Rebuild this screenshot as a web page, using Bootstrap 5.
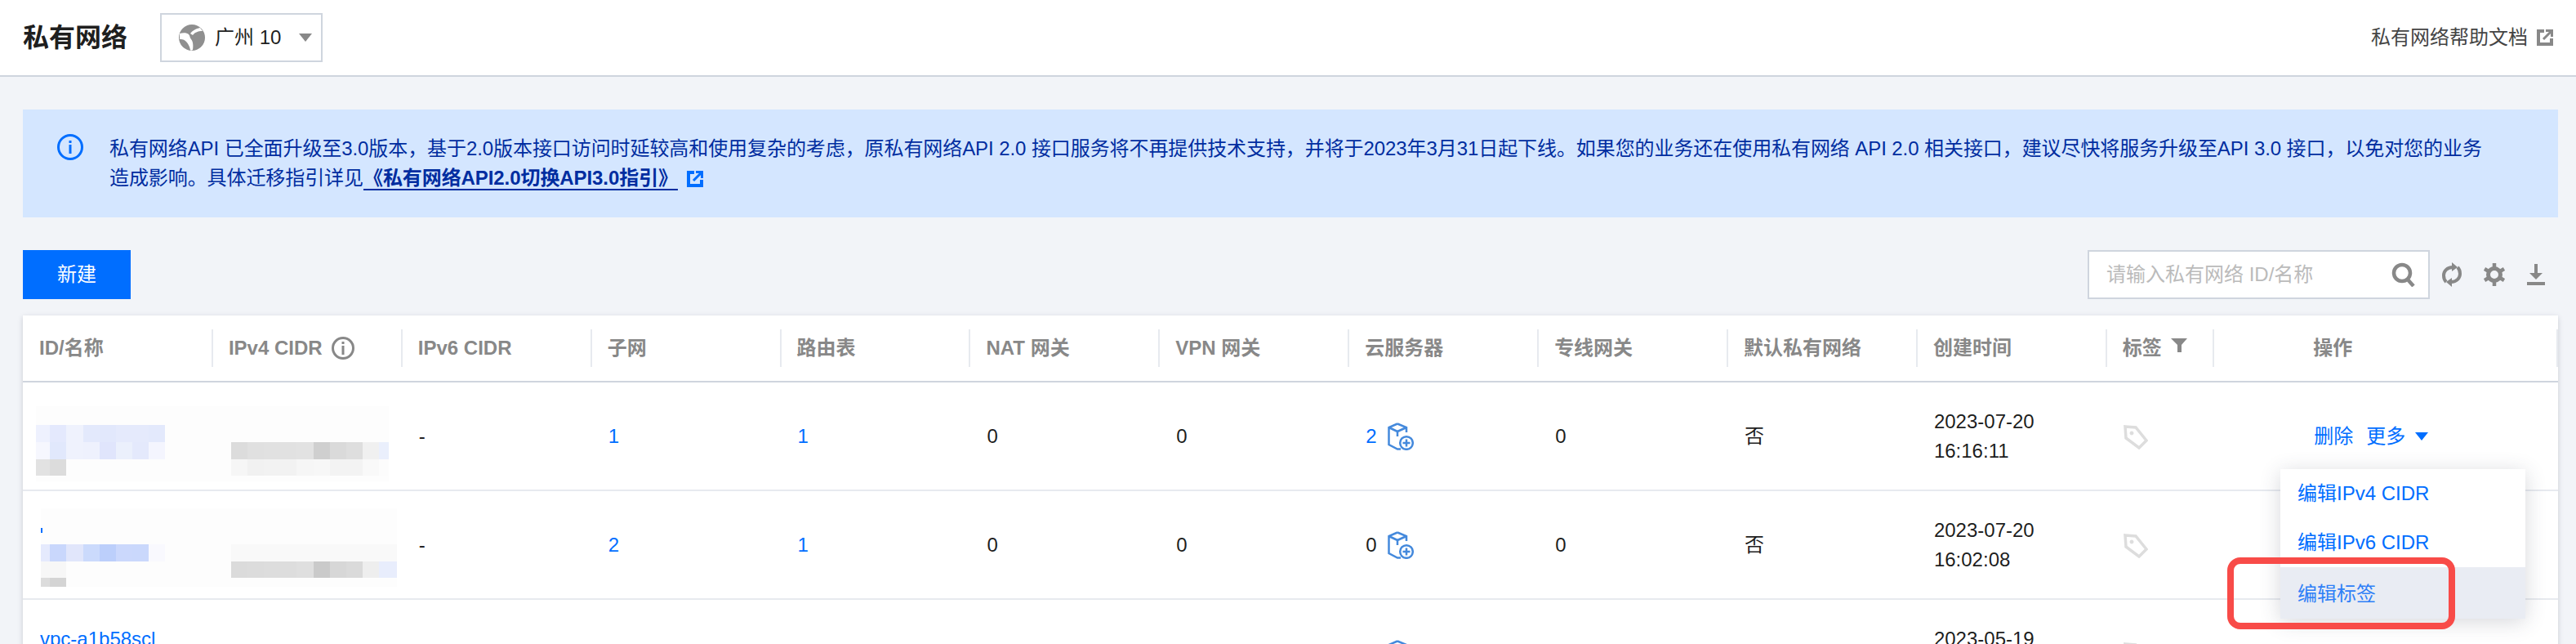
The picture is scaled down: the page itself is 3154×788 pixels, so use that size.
<!DOCTYPE html>
<html lang="zh-CN">
<head>
    <meta charset="UTF-8">
    <meta name="viewport" content="width=device-width, initial-scale=1.0">
    <title>私有网络</title>
    <link rel="stylesheet" href="https://cdn.jsdelivr.net/npm/bootstrap@5.3.0/dist/css/bootstrap.min.css">
    <style>
        html, body {
            height: 788px;
            overflow: hidden;
        }
        body {
            background: #f2f4f8;
            color: rgba(0, 0, 0, .9);
            font-family: "Liberation Sans", "Noto Sans CJK SC", sans-serif;
            font-size: 24px;
            line-height: 36px;
        }
        .top-bar {
            height: 94px;
            background: #fff;
            border-bottom: 2px solid #cfd5de;
            padding: 0 28px;
        }
        .page-title {
            font-size: 32px;
            font-weight: 700;
            margin: 0 40px 0 0;
            line-height: 44px;
        }
        .region-select {
            width: 199px;
            height: 60px;
            border: 2px solid #cfd5de;
            padding-left: 21px;
            gap: 12px;
        }
        .caret-down {
            width: 0;
            height: 0;
            margin-left: 10px;
            border-left: 8px solid transparent;
            border-right: 8px solid transparent;
            border-top: 10px solid #888;
        }
        .help-link {
            color: #444;
            gap: 11px;
            text-decoration: none;
        }
        .page-body {
            padding: 40px 22px 0 28px;
        }
        .notice {
            background: #d4e6ff;
            color: #002da0;
            border: 0;
            border-radius: 0;
            margin: 0 0 40px;
            padding: 30px 70px 30px 42px;
            gap: 32px;
            letter-spacing: -.08px;
        }
        .notice-link {
            color: #002da0;
            font-weight: 700;
            text-decoration-thickness: 2px;
            text-underline-offset: 5px;
        }
        .notice-ext {
            vertical-align: -3px;
            margin-left: 4px;
        }
        .btn-new {
            width: 132px;
            height: 60px;
            background: #006eff;
            border: 0;
            border-radius: 0;
            font-size: 24px;
        }
        .search-box {
            width: 419px;
            height: 60px;
            border: 2px solid #cfd5de;
            background: #fff;
            padding-right: 15px;
        }
        .search-input {
            border: 0;
            border-radius: 0;
            padding: 0 0 0 21px;
            font-size: 24px;
            height: 56px;
            background: transparent;
        }
        .search-input::placeholder {
            color: #bbb;
        }
        .tool-icons {
            gap: 27px;
            padding: 0 16px 0 15px;
        }
        .vpc-card {
            margin-top: 20px;
            background: #fff;
            box-shadow: 0 2px 6px rgba(54, 58, 80, .22);
        }
        .vpc-table {
            table-layout: fixed;
            width: 100%;
            margin: 0;
            border-collapse: separate;
            border-spacing: 0;
            --bs-table-bg: transparent;
            color: inherit;
        }
        .vpc-table th {
            height: 82px;
            padding: 0;
            border-bottom: 2px solid #cfd5de;
            font-weight: 700;
            color: #888;
            vertical-align: middle;
        }
        .vpc-table td {
            height: 133px;
            padding: 0 0 0 21px;
            border-bottom: 2px solid #e7eaef;
            vertical-align: middle;
        }
        .col-base { width: 231.9px; }
        .col-tag { width: 131.5px; }
        .th-inner {
            height: 46px;
            border-left: 2px solid #e7eaef;
            padding-left: 19px;
            margin-left: -1px;
            gap: 11px;
        }
        .th-first {
            border-left: 0;
            padding-left: 20px;
            margin-left: 0;
        }
        .th-op {
            padding-left: 121px;
            border-right: 2px solid #e7eaef;
        }
        .vpc-table td.td-op {
            padding-left: 123px;
        }
        .blue-link {
            color: #006eff;
            text-decoration: none;
        }
        .cvm-cell {
            gap: 13px;
        }
        .caret-blue {
            width: 0;
            height: 0;
            margin-left: 12px;
            border-left: 8px solid transparent;
            border-right: 8px solid transparent;
            border-top: 10px solid #006eff;
        }
        .mosaic {
            position: absolute;
            left: 16px;
            filter: blur(.7px);
        }
        .mosaic-a { top: 111px; }
        .mosaic-b { top: 236px; left: 22px; }
        .row-menu {
            display: block;
            position: absolute;
            top: 188px;
            left: 2764px;
            width: 300px;
            padding: 0;
            margin: 0;
            border: 0;
            border-radius: 0;
            font-size: 24px;
            box-shadow: 0 4px 24px rgba(54, 58, 80, .2);
        }
        .row-menu .dropdown-item {
            height: 60px;
            line-height: 60px;
            padding: 0 0 0 21px;
            color: #006eff;
        }
        .row-menu .dropdown-item.menu-hover {
            height: 63px;
            line-height: 66px;
            background: #e9ecf3;
            color: #2f80f7;
        }
        .red-box {
            position: absolute;
            z-index: 1001;
            top: 296px;
            left: 2699px;
            width: 279px;
            height: 88px;
            border: 8px solid #f84b48;
            border-radius: 16px;
            pointer-events: none;
        }
    </style>
</head>
<body>

    <header class="top-bar d-flex align-items-center">
        <h1 class="page-title">私有网络</h1>
        <div class="region-select d-flex align-items-center">
            <svg width="32" height="32" viewBox="0 0 32 32">
                <circle cx="16" cy="16" r="16" fill="#8f8f8f"/>
                <path d="M1 11c4-1 9-1 11 1s1 4 3 6 3 7 2 13c-1 1-3 1-3 0-1-5-3-8-5-10S6 18 1 18z" fill="#fff"/>
                <path d="M14 11c2-3 7-6 12-7l3 4c-6 0-10 2-12 5z" fill="#fff"/>
            </svg>
            <span>广州 10</span>
            <span class="caret-down"></span>
        </div>
        <a class="help-link d-flex align-items-center ms-auto" href="#">
            <span>私有网络帮助文档</span>
            <svg width="20" height="20" viewBox="0 0 20 20" fill="none" stroke="#888" stroke-width="4">
                <path d="M9 2H2v16h16v-7"/>
                <path d="M8 12L17 3" stroke-width="3"/>
                <path d="M11 1.500h7.500V9" stroke-width="3"/>
            </svg>
        </a>
    </header>

    <main class="page-body">
        <div class="alert notice d-flex">
            <svg class="flex-shrink-0" width="32" height="32" viewBox="0 0 32 32">
                <circle cx="16" cy="16" r="14.500" fill="none" stroke="#006eff" stroke-width="3"/>
                <rect x="14.500" y="8" width="3" height="3" fill="#006eff"/>
                <rect x="14.500" y="13" width="3" height="11" fill="#006eff"/>
            </svg>
            <div>私有网络API 已全面升级至3.0版本，基于2.0版本接口访问时延较高和使用复杂的考虑，原私有网络API 2.0 接口服务将不再提供技术支持，并将于2023年3月31日起下线。如果您的业务还在使用私有网络 API 2.0 相关接口，建议尽快将服务升级至API 3.0 接口，以免对您的业务造成影响。具体迁移指引详见<a class="notice-link" href="#">《私有网络API2.0切换API3.0指引》</a>
                <svg class="notice-ext" width="20" height="20" viewBox="0 0 20 20" fill="none" stroke="#006eff" stroke-width="4">
                    <path d="M9 2H2v16h16v-7"/>
                    <path d="M8 12L17 3" stroke-width="3"/>
                    <path d="M11 1.500h7.500V9" stroke-width="3"/>
                </svg>
            </div>
        </div>

        <div class="d-flex justify-content-between">
            <button class="btn btn-primary btn-new" type="button">新建</button>
            <div class="d-flex align-items-center">
                <div class="search-box d-flex align-items-center">
                    <input class="form-control search-input" type="text" placeholder="请输入私有网络 ID/名称">
                    <svg class="flex-shrink-0" width="30" height="30" viewBox="0 0 30 30" fill="none" stroke="#888" stroke-width="4.500">
                        <circle cx="13" cy="13" r="10"/>
                        <path d="M19 20l8 9"/>
                    </svg>
                </div>
                <div class="tool-icons d-flex align-items-center">
                    <svg width="24" height="32" viewBox="0 0 24 32" fill="none" stroke="#888" stroke-width="4">
                        <path d="M13 7C6 7 2 12 2 17c0 3 1 6 3 8"/>
                        <path d="M11 25c7 0 11-5 11-10 0-3-1-6-3-8"/>
                        <path d="M12 1l7 6-7 5z" fill="#888" stroke="none"/>
                        <path d="M12 31l-7-6 7-5z" fill="#888" stroke="none"/>
                    </svg>
                    <svg width="26" height="28" viewBox="0 0 26 28" fill="none" stroke="#888">
                        <circle cx="13" cy="14" r="7.500" stroke-width="5"/>
                        <path d="M13 0v6M13 22v6M1 7l5 3M25 7l-5 3M1 21l5-3M25 21l-5-3" stroke-width="4.500"/>
                    </svg>
                    <svg width="22" height="26" viewBox="0 0 22 26" fill="#888">
                        <rect x="9" y="0" width="4" height="13"/>
                        <path d="M3 11h16l-8 8z"/>
                        <rect x="0" y="22" width="22" height="4"/>
                    </svg>
                </div>
            </div>
        </div>

        <div class="vpc-card position-relative">
            <table class="table vpc-table">
                <colgroup>
                    <col class="col-base"><col class="col-base"><col class="col-base"><col class="col-base"><col class="col-base">
                    <col class="col-base"><col class="col-base"><col class="col-base"><col class="col-base"><col class="col-base">
                    <col class="col-base"><col class="col-tag"><col>
                </colgroup>
                <thead>
                    <tr>
                        <th><div class="th-inner th-first d-flex align-items-center">ID/名称</div></th>
                        <th>
                            <div class="th-inner d-flex align-items-center">
                                IPv4 CIDR
                                <svg width="28" height="28" viewBox="0 0 28 28">
                                    <circle cx="14" cy="14" r="12.500" fill="none" stroke="#888" stroke-width="3"/>
                                    <rect x="12.500" y="6" width="3" height="3" fill="#888"/>
                                    <rect x="12.500" y="11" width="3" height="11" fill="#888"/>
                                </svg>
                            </div>
                        </th>
                        <th><div class="th-inner d-flex align-items-center">IPv6 CIDR</div></th>
                        <th><div class="th-inner d-flex align-items-center">子网</div></th>
                        <th><div class="th-inner d-flex align-items-center">路由表</div></th>
                        <th><div class="th-inner d-flex align-items-center">NAT 网关</div></th>
                        <th><div class="th-inner d-flex align-items-center">VPN 网关</div></th>
                        <th><div class="th-inner d-flex align-items-center">云服务器</div></th>
                        <th><div class="th-inner d-flex align-items-center">专线网关</div></th>
                        <th><div class="th-inner d-flex align-items-center">默认私有网络</div></th>
                        <th><div class="th-inner d-flex align-items-center">创建时间</div></th>
                        <th>
                            <div class="th-inner d-flex align-items-center">
                                标签
                                <svg class="mb-2" width="20" height="17" viewBox="0 0 20 17" fill="#888">
                                    <path d="M0 0h20l-7 8v9H8V8z"/>
                                </svg>
                            </div>
                        </th>
                        <th><div class="th-inner th-op d-flex align-items-center">操作</div></th>
                    </tr>
                </thead>
                <tbody>
                    <tr>
                        <td></td>
                        <td></td>
                        <td>-</td>
                        <td><a class="blue-link" href="#">1</a></td>
                        <td><a class="blue-link" href="#">1</a></td>
                        <td>0</td>
                        <td>0</td>
                        <td>
                            <div class="cvm-cell d-flex align-items-center">
                                <a class="blue-link" href="#">2</a>
                                <svg width="32" height="34" viewBox="0 0 32 34" fill="none" stroke="#4489dc" stroke-width="2.500">
                                    <path d="M12 1.500L23 6v6M12 1.500L1.500 6v21L12 32.500h4M1.500 6L12 11l11-5M12 11v6"/>
                                    <circle cx="23" cy="25" r="7.800" fill="#fff"/>
                                    <path d="M23 20.500v9M18.500 25h9"/>
                                </svg>
                            </div>
                        </td>
                        <td>0</td>
                        <td>否</td>
                        <td>2023-07-20<br>16:16:11</td>
                        <td>
                            <svg width="30" height="30" viewBox="0 0 30 30" fill="none" stroke="#ddd" stroke-width="3.500">
                                <path d="M2 2l13 1 13 16-9 9L3 16z"/>
                                <circle cx="10" cy="10" r="2" fill="#ddd" stroke-width="1"/>
                            </svg>
                        </td>
                        <td class="td-op">
                            <div class="d-flex align-items-center">
                                <a class="blue-link" href="#">删除</a>
                                <a class="blue-link ms-3" href="#">更多</a>
                                <span class="caret-blue"></span>
                            </div>
                        </td>
                    </tr>
                    <tr>
                        <td></td>
                        <td></td>
                        <td>-</td>
                        <td><a class="blue-link" href="#">2</a></td>
                        <td><a class="blue-link" href="#">1</a></td>
                        <td>0</td>
                        <td>0</td>
                        <td>
                            <div class="cvm-cell d-flex align-items-center">
                                <span>0</span>
                                <svg width="32" height="34" viewBox="0 0 32 34" fill="none" stroke="#4489dc" stroke-width="2.500">
                                    <path d="M12 1.500L23 6v6M12 1.500L1.500 6v21L12 32.500h4M1.500 6L12 11l11-5M12 11v6"/>
                                    <circle cx="23" cy="25" r="7.800" fill="#fff"/>
                                    <path d="M23 20.500v9M18.500 25h9"/>
                                </svg>
                            </div>
                        </td>
                        <td>0</td>
                        <td>否</td>
                        <td>2023-07-20<br>16:02:08</td>
                        <td>
                            <svg width="30" height="30" viewBox="0 0 30 30" fill="none" stroke="#ddd" stroke-width="3.500">
                                <path d="M2 2l13 1 13 16-9 9L3 16z"/>
                                <circle cx="10" cy="10" r="2" fill="#ddd" stroke-width="1"/>
                            </svg>
                        </td>
                        <td class="td-op"></td>
                    </tr>
                    <tr>
                        <td><a class="blue-link" href="#">vpc-a1b58scl</a><br>&nbsp;</td>
                        <td></td>
                        <td>-</td>
                        <td><a class="blue-link" href="#">1</a></td>
                        <td><a class="blue-link" href="#">1</a></td>
                        <td>0</td>
                        <td>0</td>
                        <td>
                            <div class="cvm-cell d-flex align-items-center">
                                <span>0</span>
                                <svg width="32" height="34" viewBox="0 0 32 34" fill="none" stroke="#4489dc" stroke-width="2.500">
                                    <path d="M12 1.500L23 6v6M12 1.500L1.500 6v21L12 32.500h4M1.500 6L12 11l11-5M12 11v6"/>
                                    <circle cx="23" cy="25" r="7.800" fill="#fff"/>
                                    <path d="M23 20.500v9M18.500 25h9"/>
                                </svg>
                            </div>
                        </td>
                        <td>0</td>
                        <td>否</td>
                        <td>2023-05-19<br>10:20:31</td>
                        <td>
                            <svg width="30" height="30" viewBox="0 0 30 30" fill="none" stroke="#ddd" stroke-width="3.500">
                                <path d="M2 2l13 1 13 16-9 9L3 16z"/>
                                <circle cx="10" cy="10" r="2" fill="#ddd" stroke-width="1"/>
                            </svg>
                        </td>
                        <td class="td-op"></td>
                    </tr>
                </tbody>
            </table>

            <!-- redacted cells, row 1 -->
            <svg class="mosaic mosaic-a" width="432" height="92" viewBox="44 497 432 92">
                <rect x="44" y="497" width="432" height="92" fill="#fdfdfd"/>
                <rect x="44" y="520" width="17" height="21" fill="#eef1fe"/><rect x="61" y="520" width="20" height="21" fill="#e4e9fd"/><rect x="81" y="520" width="21" height="21" fill="#eff2fd"/><rect x="102" y="520" width="20" height="21" fill="#e3e9fc"/><rect x="122" y="520" width="20" height="21" fill="#e2e8fc"/><rect x="142" y="520" width="20" height="21" fill="#e5eafc"/><rect x="162" y="520" width="20" height="21" fill="#e5eafc"/><rect x="182" y="520" width="20" height="21" fill="#e3e9fc"/>
                <rect x="44" y="541" width="17" height="21" fill="#f6f7fe"/><rect x="61" y="541" width="20" height="21" fill="#e1e8fc"/><rect x="81" y="541" width="21" height="21" fill="#eff2fd"/><rect x="102" y="541" width="20" height="21" fill="#eef1fd"/><rect x="122" y="541" width="20" height="21" fill="#e0e5fc"/><rect x="142" y="541" width="20" height="21" fill="#ebf0fc"/><rect x="162" y="541" width="20" height="21" fill="#e4e9fc"/><rect x="182" y="541" width="20" height="21" fill="#f4f5fe"/>
                <rect x="44" y="562" width="17" height="20" fill="#e2e2e2"/><rect x="61" y="562" width="20" height="20" fill="#dcdcdc"/>
                <rect x="283" y="541" width="20" height="21" fill="#dcdcdc"/><rect x="303" y="541" width="20" height="21" fill="#e0e0e0"/><rect x="323" y="541" width="20" height="21" fill="#e1e1e1"/><rect x="343" y="541" width="20" height="21" fill="#e1e1e1"/><rect x="363" y="541" width="21" height="21" fill="#e2e2e2"/><rect x="384" y="541" width="20" height="21" fill="#cfcfcf"/><rect x="404" y="541" width="20" height="21" fill="#dadada"/><rect x="424" y="541" width="20" height="21" fill="#dedede"/><rect x="444" y="541" width="20" height="21" fill="#f0f0f0"/><rect x="464" y="541" width="12" height="21" fill="#eaeffc"/>
                <rect x="283" y="562" width="20" height="20" fill="#f6f6f6"/><rect x="303" y="562" width="20" height="20" fill="#f1f1f1"/><rect x="323" y="562" width="40" height="20" fill="#f2f2f2"/><rect x="363" y="562" width="21" height="20" fill="#f6f6f6"/><rect x="384" y="562" width="20" height="20" fill="#f7f7f7"/><rect x="404" y="562" width="40" height="20" fill="#f3f3f3"/><rect x="444" y="562" width="20" height="20" fill="#f9f9f9"/><rect x="464" y="562" width="12" height="20" fill="#fcfcfc"/>
            </svg>

            <!-- redacted cells, row 2 -->
            <svg class="mosaic mosaic-b" width="436" height="96" viewBox="50 622 436 96">
                <rect x="50" y="622" width="436" height="96" fill="#fdfdfd"/>
                <rect x="50" y="646" width="2" height="6" fill="#006eff"/>
                <rect x="50" y="682" width="3" height="3" fill="#222"/>
                <rect x="50" y="666" width="11" height="21" fill="#e5eafd"/><rect x="61" y="666" width="20" height="21" fill="#c9d7fc"/><rect x="81" y="666" width="21" height="21" fill="#e1e6fb"/><rect x="102" y="666" width="20" height="21" fill="#cbdafc"/><rect x="122" y="666" width="20" height="21" fill="#bccffb"/><rect x="142" y="666" width="20" height="21" fill="#cbd8fc"/><rect x="162" y="666" width="20" height="21" fill="#cad8fc"/><rect x="182" y="666" width="20" height="21" fill="#f9f9fe"/>
                <rect x="50" y="687" width="31" height="20" fill="#f7f7f7"/>
                <rect x="50" y="707" width="11" height="11" fill="#dcdcdc"/><rect x="61" y="707" width="20" height="11" fill="#d4d4d4"/>
                <rect x="283" y="666" width="203" height="21" fill="#f9f9f9"/>
                <rect x="283" y="687" width="20" height="20" fill="#dbdbdb"/><rect x="303" y="687" width="20" height="20" fill="#dcdcdc"/><rect x="323" y="687" width="40" height="20" fill="#dddddd"/><rect x="363" y="687" width="21" height="20" fill="#dfdfdf"/><rect x="384" y="687" width="20" height="20" fill="#cacaca"/><rect x="404" y="687" width="20" height="20" fill="#d7d7d7"/><rect x="424" y="687" width="20" height="20" fill="#dadada"/><rect x="444" y="687" width="20" height="20" fill="#eeeeee"/><rect x="464" y="687" width="22" height="20" fill="#e8edfc"/>
            </svg>

            <ul class="dropdown-menu row-menu list-unstyled">
                <li><a class="dropdown-item" href="#">编辑IPv4 CIDR</a></li>
                <li><a class="dropdown-item" href="#">编辑IPv6 CIDR</a></li>
                <li><a class="dropdown-item menu-hover" href="#">编辑标签</a></li>
            </ul>
            <div class="red-box"></div>
        </div>
    </main>

    <script src="https://cdn.jsdelivr.net/npm/bootstrap@5.3.0/dist/js/bootstrap.bundle.min.js"></script>
</body>
</html>
